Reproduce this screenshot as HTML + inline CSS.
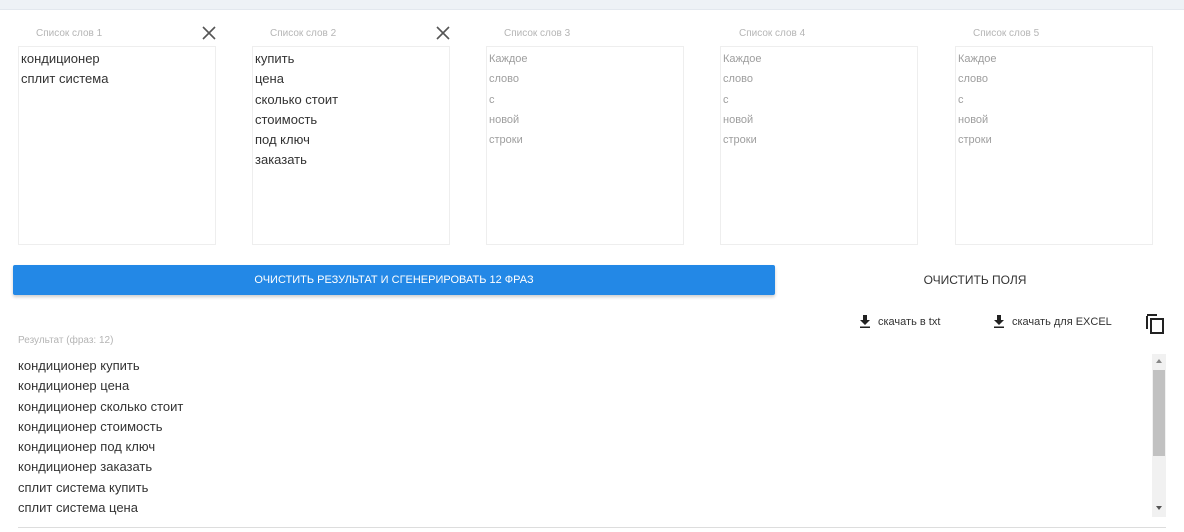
<!DOCTYPE html>
<html><head><meta charset="utf-8"><style>
*{box-sizing:border-box;margin:0;padding:0}
body{width:1184px;height:532px;background:#fff;font-family:"Liberation Sans",sans-serif;position:relative;overflow:hidden;color:#333}
.top{position:absolute;left:0;top:0;width:1184px;height:10px;background:#eef2f6;border-bottom:1px solid #e3e8ee}
.lbl{position:absolute;font-size:10px;color:#b5b5b5}
.box{position:absolute;top:46px;width:198px;height:199px;border:1px solid #eee;padding:2px 2px}
.box div{font-size:13px;line-height:20.3px;color:#333}
.box.ph div{font-size:11px;color:#9e9e9e}
.x{position:absolute;top:26px}
.btn{position:absolute;left:13px;top:265px;width:762px;height:30px;background:#2388e6;border-radius:2px;box-shadow:0 2px 3px rgba(0,0,0,.2);color:#fff;font-size:11px;text-align:center;line-height:30px}
.clr{position:absolute;left:880px;top:265px;width:190px;text-align:center;line-height:30px;font-size:12px;color:#333}
.dl{position:absolute;top:314px;font-size:11px;color:#333;line-height:16px}
.dl svg{vertical-align:-3px;margin-right:7px}
.res{position:absolute;left:18px;top:356px}
.res div{font-size:13px;line-height:20.3px;color:#333}
.sb{position:absolute;left:1152px;top:354px;width:14px;height:163px;background:#f1f1f1}
.th{position:absolute;left:1153px;top:370px;width:12px;height:86px;background:#c1c1c1}
</style></head><body>
<div class="top"></div>

<div class="lbl" style="left:36px;top:28px">Список слов 1</div>
<div class="lbl" style="left:270px;top:28px">Список слов 2</div>
<div class="lbl" style="left:504px;top:28px">Список слов 3</div>
<div class="lbl" style="left:739px;top:28px">Список слов 4</div>
<div class="lbl" style="left:973px;top:28px">Список слов 5</div>
<svg class="x" style="left:202px" width="14" height="14" viewBox="0 0 14 14"><path d="M1 1L13 13M13 1L1 13" stroke="#555" stroke-width="1.6"/></svg>
<svg class="x" style="left:436px" width="14" height="14" viewBox="0 0 14 14"><path d="M1 1L13 13M13 1L1 13" stroke="#555" stroke-width="1.6"/></svg>

<div class="box" style="left:18px"><div>кондиционер</div><div>сплит система</div></div>
<div class="box" style="left:252px"><div>купить</div><div>цена</div><div>сколько стоит</div><div>стоимость</div><div>под ключ</div><div>заказать</div></div>
<div class="box ph" style="left:486px"><div>Каждое</div><div>слово</div><div>с</div><div>новой</div><div>строки</div></div>
<div class="box ph" style="left:720px"><div>Каждое</div><div>слово</div><div>с</div><div>новой</div><div>строки</div></div>
<div class="box ph" style="left:955px"><div>Каждое</div><div>слово</div><div>с</div><div>новой</div><div>строки</div></div>

<div class="btn">ОЧИСТИТЬ РЕЗУЛЬТАТ И СГЕНЕРИРОВАТЬ 12 ФРАЗ</div>
<div class="clr">ОЧИСТИТЬ ПОЛЯ</div>

<div class="dl" style="left:859px"><svg width="12" height="13" viewBox="0 0 12 13"><path d="M4 0h4v5h3L6 10 1 5h3z" fill="#222"/><rect x="1" y="11.5" width="10" height="1.5" fill="#222"/></svg>скачать в txt</div>
<div class="dl" style="left:993px"><svg width="12" height="13" viewBox="0 0 12 13"><path d="M4 0h4v5h3L6 10 1 5h3z" fill="#222"/><rect x="1" y="11.5" width="10" height="1.5" fill="#222"/></svg>скачать для EXCEL</div>
<svg style="position:absolute;left:1146px;top:313px" width="19" height="21" viewBox="0 0 19 21"><path d="M1 3v13" stroke="#222" stroke-width="2" fill="none"/><path d="M1 2h10" stroke="#222" stroke-width="2"/><rect x="5" y="6" width="12" height="14" stroke="#222" stroke-width="2" fill="none"/></svg>

<div class="lbl" style="left:18px;top:335px;font-size:10px">Результат (фраз: 12)</div>
<div class="res">
<div>кондиционер купить</div><div>кондиционер цена</div><div>кондиционер сколько стоит</div><div>кондиционер стоимость</div><div>кондиционер под ключ</div><div>кондиционер заказать</div><div>сплит система купить</div><div>сплит система цена</div>
</div>
<div class="sb"></div><div class="th"></div>
<svg style="position:absolute;left:1155px;top:358px" width="8" height="6"><path d="M1 5L4 1 7 5z" fill="#888"/></svg>
<svg style="position:absolute;left:1155px;top:505px" width="8" height="6"><path d="M1 1L4 5 7 1z" fill="#555"/></svg>
<div style="position:absolute;left:18px;top:527px;width:1148px;height:1px;background:#ddd"></div>
</body></html>
